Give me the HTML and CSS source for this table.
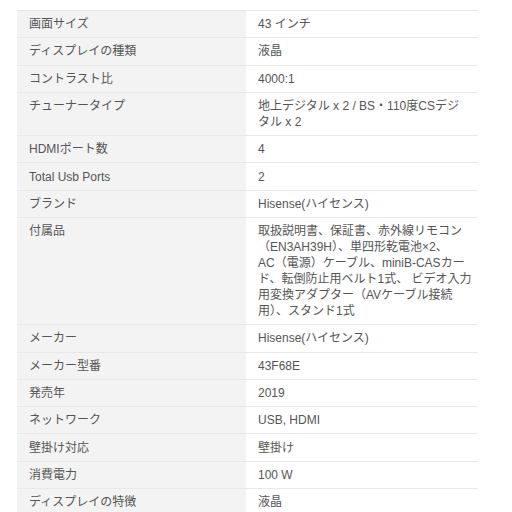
FILE: index.html
```html
<!DOCTYPE html>
<html lang="ja">
<head>
    <meta charset="UTF-8">
    <title>商品の仕様</title>
    <meta name="viewport" content="width=device-width, initial-scale=1">
    <link rel="stylesheet" href="styles.css">
</head>
<body>
<div class="container">
    <!-- 仕様テーブル -->
    <table class="spec-table">
        <tr><th>画面サイズ</th><td>43 インチ</td></tr>
        <tr><th>ディスプレイの種類</th><td>液晶</td></tr>
        <tr><th>コントラスト比</th><td>4000:1</td></tr>
        <tr><th>チューナータイプ</th><td class="lines">地上デジタル x 2 / BS・110度CSデジ<br>タル x 2</td></tr>
        <tr><th>HDMIポート数</th><td>4</td></tr>
        <tr><th>Total Usb Ports</th><td>2</td></tr>
        <tr><th>ブランド</th><td>Hisense(ハイセンス)</td></tr>
        <tr><th>付属品</th><td class="lines">取扱説明書、保証書、赤外線リモコン<br>（EN3AH39H）、単四形乾電池×2、<br>AC（電源）ケーブル、miniB-CASカー<br>ド、転倒防止用ベルト1式、 ビデオ入力<br>用変換アダプター（AVケーブル接続<br>用）、スタンド1式</td></tr>
        <tr><th>メーカー</th><td>Hisense(ハイセンス)</td></tr>
        <tr><th>メーカー型番</th><td>43F68E</td></tr>
        <tr><th>発売年</th><td>2019</td></tr>
        <tr><th>ネットワーク</th><td>USB, HDMI</td></tr>
        <tr><th>壁掛け対応</th><td>壁掛け</td></tr>
        <tr><th>消費電力</th><td>100 W</td></tr>
        <tr><th>ディスプレイの特徴</th><td>液晶</td></tr>
    </table>
</div>
</body>
</html>
```

FILE: styles.css
```css
body { font-family: "Liberation Sans", "Noto Sans CJK JP", sans-serif; background: #fff; margin: 0; padding: 0; color: #555; }
.container { padding: 10px 34px 0 17px; }
.spec-table { width: 461px; table-layout: fixed; border-collapse: collapse; font-size: 12px; line-height: 16px; }
.spec-table th, .spec-table td { text-align: left; vertical-align: top; padding: 5.15px 12px; border-top: 1px solid #e8e8e8; font-weight: normal; }
.spec-table th { width: 205px; background: #f3f3f3; }
.spec-table td { background: #fff; }
.spec-table td.lines { white-space: nowrap; }
```
